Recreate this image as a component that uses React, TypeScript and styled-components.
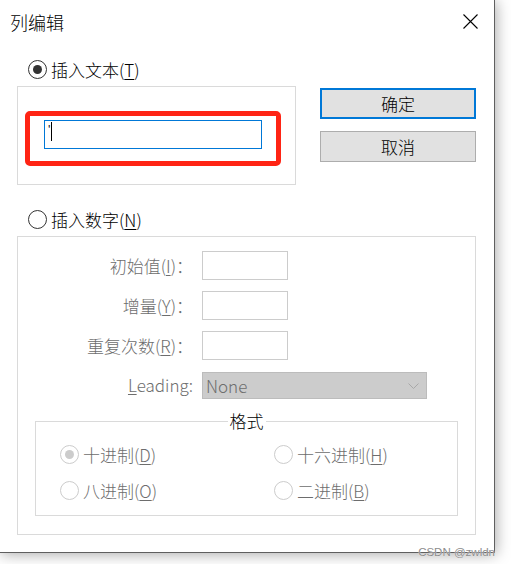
import React from "react";
import styled, { createGlobalStyle } from "styled-components";

const Global = createGlobalStyle`
  html, body { margin: 0; padding: 0; background: #ffffff; }
  body {
    font-family: "Noto Sans CJK SC", "Noto Sans", sans-serif;
    font-weight: 300;
    width: 511px; height: 564px; overflow: hidden; position: relative;
  }
  * { box-sizing: border-box; }
`;

const Window = styled.div`
  position: relative;
  width: 495px;
  height: 553px;
  background: #ffffff;
  border-right: 1px solid #5f5f5f;
  border-bottom: 1px solid #5f5f5f;
  box-shadow: 1px 1px 14px rgba(0, 0, 0, 0.35);
`;

const TitleBar = styled.div`
  display: flex;
  align-items: center;
  justify-content: space-between;
  height: 43px;
  padding: 0 16px 0 10px;
`;

const Title = styled.div`
  font-size: 18px;
  line-height: 24px;
  color: #000;
`;

const CloseIcon = styled.svg`
  width: 15px;
  height: 15px;
  display: block;
`;

const Body = styled.div`
  padding: 14px 0 0 17px;
  width: 476px;
`;

const TopSection = styled.div`
  display: grid;
  grid-template-columns: 279px 156px;
  column-gap: 24px;
`;

const Column = styled.div`
  display: flex;
  flex-direction: column;
`;

const ButtonColumn = styled.div`
  display: flex;
  flex-direction: column;
  gap: 12px;
  padding-top: 31px;
`;

const RadioRow = styled.label<{ $disabled?: boolean }>`
  display: flex;
  align-items: center;
  gap: 4px;
  height: 25px;
  font-size: 17px;
  line-height: 24px;
  color: ${(p) => (p.$disabled ? "#6d6d6d" : "#000")};
  padding-left: 11px;
`;

const GridRadioRow = styled(RadioRow)`
  padding-left: 0;
`;

const Circle = styled.span<{ $disabled?: boolean }>`
  width: 19px;
  height: 19px;
  border-radius: 50%;
  border: 1px solid ${(p) => (p.$disabled ? "#cccccc" : "#333333")};
  display: grid;
  place-items: center;
  flex: none;
  background: #fff;
`;

const Dot = styled.span<{ $disabled?: boolean }>`
  width: 9px;
  height: 9px;
  border-radius: 50%;
  background: ${(p) => (p.$disabled ? "#cccccc" : "#333333")};
`;

const Mn = styled.span`
  text-decoration: underline;
  text-underline-offset: 2px;
  text-decoration-thickness: 1px;
`;

const GroupBox = styled.div<{ $h: number; $w: number }>`
  margin-top: 4px;
  width: ${(p) => p.$w}px;
  height: ${(p) => p.$h}px;
  border: 1px solid #dadada;
`;

const TextGroup = styled(GroupBox)`
  padding: 24px 0 0 7px;
`;

const Highlight = styled.div`
  width: 256px;
  height: 55px;
  border: 5px solid #ff2414;
  border-radius: 5px;
  padding: 4px 14px 0;
`;

const TextBox = styled.div`
  width: 218px;
  height: 29px;
  border: 1px solid #0078d7;
  display: flex;
  align-items: flex-start;
  padding: 1px 0 0 3px;
`;

const TypedChar = styled.span`
  font-family: "Liberation Sans", sans-serif;
  font-size: 13px;
  line-height: 13px;
  color: #222;
  margin-top: 1px;
`;

const Caret = styled.span`
  width: 1px;
  height: 19px;
  background: #000;
  margin-left: 1px;
`;

const Button = styled.button<{ $primary?: boolean }>`
  height: 31px;
  width: 156px;
  background: #e1e1e1;
  border: ${(p) => (p.$primary ? "2px solid #0078d7" : "1px solid #adadad")};
  font-family: inherit;
  font-weight: inherit;
  font-size: 17px;
  line-height: 24px;
  color: #000;
  padding: 0;
  margin: 0;
  display: flex;
  align-items: center;
  justify-content: center;
`;

const Section = styled.div`
  margin-top: 22px;
  display: flex;
  flex-direction: column;
`;

const NumberGroup = styled(GroupBox)`
  padding: 14px 16px 0 17px;
`;

const FormGrid = styled.div`
  display: grid;
  grid-template-columns: 158px 1fr;
  column-gap: 9px;
  row-gap: 11px;
  align-items: center;
`;

const FieldLabel = styled.span`
  text-align: right;
  font-size: 17px;
  line-height: 24px;
  color: #6d6d6d;
  white-space: nowrap;
`;

const SmallInput = styled.div`
  width: 86px;
  height: 29px;
  border: 1px solid #cccccc;
  background: #fff;
`;

const Select = styled.div`
  width: 225px;
  height: 27px;
  margin-top: 1px;
  background: #cccccc;
  border: 1px solid #bcbcbc;
  display: flex;
  align-items: center;
  justify-content: space-between;
  padding: 0 7px 0 3px;
  font-size: 17px;
  line-height: 24px;
  color: #6d6d6d;
`;

const Fieldset = styled.fieldset`
  margin: 10px 0 0 0;
  width: 423px;
  border: 1px solid #dadada;
  padding: 9px 0 12px 0;
  min-width: 0;
`;

const Legend = styled.legend`
  margin: 0 auto;
  padding: 0 2px;
  font-size: 17px;
  line-height: 24px;
  color: #000;
`;

const RadioGrid = styled.div`
  display: grid;
  grid-template-columns: 214px 1fr;
  row-gap: 11px;
  padding-left: 24px;
`;

const Watermark = styled.div`
  position: absolute;
  right: 16px;
  bottom: 5px;
  font-family: "Liberation Sans", sans-serif;
  font-size: 11.5px;
  line-height: 13px;
  color: #8c8c8c;
  text-shadow: 0 0 1px #fff;
`;

function Radio({
  checked,
  disabled,
  children,
  inGrid,
}: {
  checked?: boolean;
  disabled?: boolean;
  children: React.ReactNode;
  inGrid?: boolean;
}) {
  const Row = inGrid ? GridRadioRow : RadioRow;
  return (
    <Row $disabled={disabled}>
      <Circle $disabled={disabled}>{checked && <Dot $disabled={disabled} />}</Circle>
      <span>{children}</span>
    </Row>
  );
}

export default function App() {
  return (
    <>
      <Global />
      <Window>
        <TitleBar>
          <Title>列编辑</Title>
          <CloseIcon viewBox="0 0 15 15">
            <path d="M0.5 0.5 L14.5 14.5 M14.5 0.5 L0.5 14.5" stroke="#000" strokeWidth="1.1" />
          </CloseIcon>
        </TitleBar>
        <Body>
          <TopSection>
            <Column>
              <Radio checked>
                插入文本(<Mn>T</Mn>)
              </Radio>
              <TextGroup $w={279} $h={99}>
                <Highlight>
                  <TextBox>
                    <TypedChar>'</TypedChar>
                    <Caret />
                  </TextBox>
                </Highlight>
              </TextGroup>
            </Column>
            <ButtonColumn>
              <Button $primary>确定</Button>
              <Button>取消</Button>
            </ButtonColumn>
          </TopSection>
          <Section>
            <Radio>
              插入数字(<Mn>N</Mn>)
            </Radio>
            <NumberGroup $w={459} $h={299}>
              <FormGrid>
                <FieldLabel>
                  初始值(<Mn>I</Mn>)：
                </FieldLabel>
                <SmallInput />
                <FieldLabel>
                  增量(<Mn>Y</Mn>)：
                </FieldLabel>
                <SmallInput />
                <FieldLabel>
                  重复次数(<Mn>R</Mn>)：
                </FieldLabel>
                <SmallInput />
                <FieldLabel>
                  <Mn>L</Mn>eading:
                </FieldLabel>
                <Select>
                  <span>None</span>
                  <svg width="11" height="6" viewBox="0 0 11 6">
                    <path d="M0.5 0.5 L5.5 5.5 L10.5 0.5" fill="none" stroke="#a8a8a8" strokeWidth="1" />
                  </svg>
                </Select>
              </FormGrid>
              <Fieldset>
                <Legend>格式</Legend>
                <RadioGrid>
                  <Radio inGrid checked disabled>
                    十进制(<Mn>D</Mn>)
                  </Radio>
                  <Radio inGrid disabled>
                    十六进制(<Mn>H</Mn>)
                  </Radio>
                  <Radio inGrid disabled>
                    八进制(<Mn>O</Mn>)
                  </Radio>
                  <Radio inGrid disabled>
                    二进制(<Mn>B</Mn>)
                  </Radio>
                </RadioGrid>
              </Fieldset>
            </NumberGroup>
          </Section>
        </Body>
      </Window>
      <Watermark>CSDN @zwldn</Watermark>
    </>
  );
}
